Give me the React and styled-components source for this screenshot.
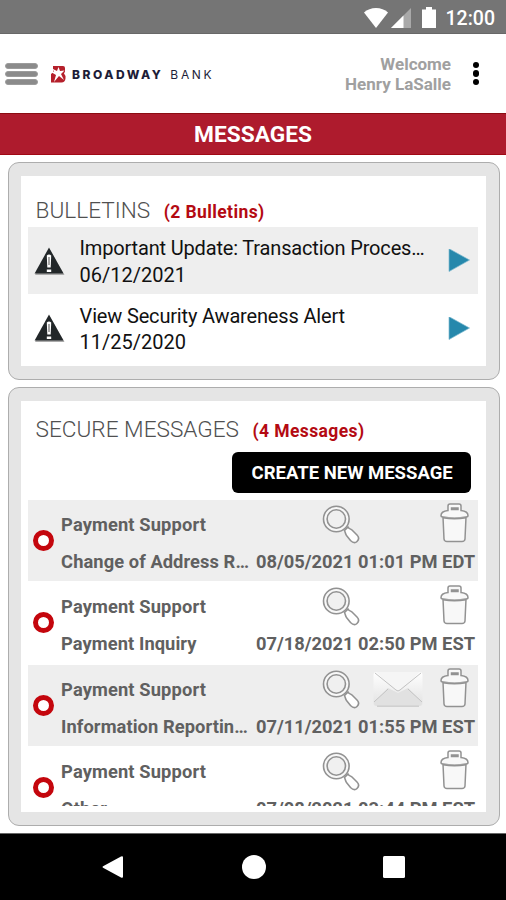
import React from "react";
import styled, { createGlobalStyle } from "styled-components";

const GlobalStyle = createGlobalStyle`
  * { box-sizing: border-box; }
  body { margin: 0; background: #fff; font-family: Roboto, sans-serif; }
`;

const Screen = styled.div`
  width: 506px;
  height: 900px;
  display: flex;
  flex-direction: column;
  overflow: hidden;
  background: #fff;
`;

const StatusBar = styled.div`
  height: 34px;
  flex: none;
  background: #757575;
  border-bottom: 1px solid #686868;
  display: flex;
  align-items: center;
  justify-content: flex-end;
  padding: 2px 11px 0 0;
`;

const Clock = styled.span`
  color: #fff;
  font-size: 19.5px;
  line-height: 22px;
  font-weight: 500;
  margin-left: 8px;
  padding-top: 2px;
`;

const Header = styled.header`
  height: 79px;
  flex: none;
  display: flex;
  align-items: center;
  padding: 0 24px 0 5px;
`;

const MenuButton = styled.div`
  width: 33px;
  height: 22px;
  display: flex;
  flex-direction: column;
  justify-content: space-between;
`;

const MenuLine = styled.span`
  height: 6px;
  border-radius: 3px;
  background: #8b8b8b;
  border: 1px solid #9c9c9c;
`;

const Brand = styled.div`
  display: flex;
  align-items: center;
  margin: 2px 0 0 13px;
`;

const BrandName = styled.span`
  margin-left: 6px;
  font-family: Inter, sans-serif;
  font-size: 12px;
  line-height: 14px;
  font-weight: 800;
  letter-spacing: 2.5px;
  color: #1d1d38;
  white-space: nowrap;
`;

const BrandLight = styled.span`
  font-weight: 400;
  letter-spacing: 2.7px;
  margin-left: 2px;
`;

const Greeting = styled.div`
  margin-left: auto;
  color: #a0a0a0;
  font-size: 17px;
  line-height: 20px;
  font-weight: 700;
  text-align: right;
  margin-top: 1px;
`;

const Overflow = styled.div`
  width: 12px;
  margin-left: 19px;
  height: 24px;
  display: flex;
  flex-direction: column;
  align-items: center;
  justify-content: space-between;
`;

const Dot = styled.span`
  width: 6.4px;
  height: 6.4px;
  border-radius: 50%;
  background: #000;
`;

const TitleBar = styled.h1`
  height: 42px;
  flex: none;
  margin: 0;
  background: #ae1b2d;
  border-top: 1px solid #8b0c12;
  border-bottom: 1px solid #a00814;
  color: #fff;
  text-align: center;
  font-size: 22.7px;
  line-height: 42px;
  font-weight: 700;
`;

const Panel = styled.section`
  margin: ${(p) => p.$gap}px 6.5px 0 7.5px;
  height: ${(p) => p.$height}px;
  flex: none;
  border: 1.5px solid #adadad;
  border-radius: 11px;
  background: #e5e5e5;
  padding: 12.6px;
`;

const PanelBody = styled.div`
  height: 100%;
  background: #fff;
  padding: 0 7.5px 6px 6.5px;
  display: flex;
  flex-direction: column;
`;

const PanelHeading = styled.div`
  height: 51px;
  flex: none;
  padding: ${(p) => p.$top}px 0 0 8px;
  display: flex;
  align-items: baseline;
`;

const PanelTitle = styled.h2`
  margin: 0;
  font-size: 22.6px;
  line-height: 28px;
  font-weight: 300;
  color: #505050;
`;

const Count = styled.span`
  margin-left: 13.5px;
  font-size: 17.5px;
  font-weight: 700;
  color: #b40a12;
  letter-spacing: 0.4px;
`;

const BulletinRow = styled.div`
  height: 67.5px;
  flex: none;
  display: flex;
  align-items: center;
  padding: 2px 8px 0 6px;
  background: ${(p) => (p.$shaded ? "#eee" : "#fff")};
`;

const BulletinText = styled.div`
  flex: 1;
  margin: 1px 0 0 15px;
  font-size: 20px;
  line-height: 26.5px;
  color: #111;
  white-space: nowrap;
`;

const BulletinTitle = styled.div`
  letter-spacing: -0.17px;
`;

const BulletinDate = styled.div`
  letter-spacing: 0;
`;

const Actions = styled.div`
  display: flex;
  justify-content: flex-end;
  height: 48.5px;
  flex: none;
  padding-right: 7px;
`;

const CreateButton = styled.button`
  width: 239.5px;
  height: 41px;
  border: 0;
  padding: 2px 0 0 1px;
  border-radius: 6px;
  background: #000;
  color: #fff;
  font-family: Roboto, sans-serif;
  font-size: 18.5px;
  font-weight: 700;
`;

const MessageList = styled.div`
  flex: 1;
  min-height: 0;
  overflow: hidden;
`;

const MessageRow = styled.div`
  height: 81px;
  margin-bottom: 1.35px;
  display: flex;
  align-items: center;
  background: ${(p) => (p.$shaded ? "#eee" : "#fff")};
  color: #606060;
  font-size: 18.3px;
  font-weight: 700;
  white-space: nowrap;
`;

const UnreadMark = styled.span`
  width: 21px;
  height: 21px;
  flex: none;
  margin: 0 7px 0 5.5px;
  border: 5.5px solid #c4060d;
  border-radius: 50%;
  background: #fff;
`;

const MessageContent = styled.div`
  flex: 1;
  display: flex;
  flex-direction: column;
  height: 100%;
`;

const MessageTop = styled.div`
  height: 49px;
  display: flex;
  padding-top: 3px;
`;

const Sender = styled.span`
  width: 261px;
  line-height: 44px;
  letter-spacing: 0.13px;
`;

const IconSlot = styled.span`
  width: ${(p) => p.$width}px;
  padding-top: ${(p) => p.$top || 0}px;
  height: 46px;
  flex: none;
  display: flex;
`;

const MessageBottom = styled.div`
  display: flex;
  line-height: 26px;
`;

const Subject = styled.span`
  width: 195px;
  letter-spacing: 0.08px;
`;

const Stamp = styled.span``;

const NavBar = styled.nav`
  height: 67px;
  flex: none;
  margin-top: auto;
  background: #000;
  border-top: 1px solid #666;
  display: flex;
  align-items: center;
  justify-content: space-between;
  padding: 0 100px 0 101px;
`;

const StatusIcons = () => (
  <svg width="74" height="24" viewBox="364 5 74 24">
    <path d="M364 11.500C370 5.500 382 5.500 388 11.500L376 27Z" fill="#fff" />
    <path d="M391 27 411 7V27Z" fill="#a9a9a9" />
    <path d="M391 27 403.500 14.500V27Z" fill="#fff" />
    <path d="M422 8.500h4V6h6v2.500h4V27h-14Z" fill="#fff" />
  </svg>
);

const Logo = () => (
  <svg width="15" height="17" viewBox="0 0 15 17">
    <path d="M2 0h10q2 0 2 2v3.500l-1 2q2 2 1.500 5-.5 4-4 4H0V8l2-1.500Z" fill="#b5202b" />
    <path
      d="M1 2.500 6 5 7.500 1 9 5l4.500-.5L10 8l3 6-5-4-5 6 2-7-5-3 3-.5Z"
      fill="#fff"
    />
  </svg>
);

const Warning = () => (
  <svg width="31" height="29" viewBox="0 0 31 29">
    <path d="M15.500 2 30.500 28H1Z" fill="#aaa" />
    <path d="M15 .5 29.500 26.500H.6Z" fill="#222729" />
    <path d="M12.800 8.500q2.200-2 4.400 0L16.700 20.500h-3.400Z" fill="#fff" />
    <path d="M14.500 10h1v8h-1Z" fill="#555" />
    <rect x="12.800" y="22.500" width="4.400" height="2.500" fill="#fff" />
  </svg>
);

const Arrow = () => (
  <svg width="22" height="24" viewBox="0 1 22 24">
    <path d="M1 .7 21.500 12 1 23.500Z" fill="#2688ac" stroke="#7db9ce" strokeWidth=".7" />
  </svg>
);

const Magnifier = () => (
  <svg width="38" height="40" viewBox="0 0 38 40" fill="none" stroke="#929292" strokeWidth="1.600">
    <path d="m22.500 26.500 3.500-3.500c1 2 3 2 4 3l5 5c2 2 2 4.500 0 6.500s-4.500 1-6.500-1l-4-5c-1-1-1-3-2-5Z" fill="#fff" />
    <circle cx="14.300" cy="15" r="12.800" fill="#f8f8f8" />
    <circle cx="14.300" cy="15" r="9.200" fill="#f0f0f0" />
  </svg>
);

const Trash = () => (
  <svg width="29" height="40" viewBox="0 0 29 40" fill="#f8f8f8" stroke="#929292" strokeWidth="1.500">
    <path d="m3 14 1 22q.3 2.500 3 2.500h15q2.700 0 3-2.500l1-22Z" />
    <path d="M1 12.500c0-3 2.500-4.500 7-5V3q0-2 2-2h9q2 0 2 2v4.500c4.500.5 7 2 7 5q0 1.500-2 1.500c-7 1.300-16 1.300-23 0q-2 0-2-1.500Z" />
    <path d="M11.500 5h6.500v1.500h-6.500Z" />
    <path d="M3 14.700q11.500 2 23 0" />
  </svg>
);

const Envelope = () => (
  <svg width="50" height="37" viewBox="0 0 50 37">
    <defs>
      <linearGradient id="paper" x1="0" y1="0" x2="0" y2="1">
        <stop offset="0" stopColor="#fff" />
        <stop offset="1" stopColor="#e2e2e2" />
      </linearGradient>
    </defs>
    <rect x=".5" y="1" width="49" height="34" rx="3" fill="url(#paper)" />
    <path d="M1 32 15 17l10 5 10-5 14 15q-1 3-4 3H5q-3 0-4-3Z" fill="#e1e1e1" />
    <path d="m1 31 14-13M49 31 35 18" stroke="#c2c2c2" strokeWidth="1" />
    <path d="M3 1h44L27 19q-2 2-4 0Z" fill="#f5f5f5" />
    <path d="m2 2 21 17q2 2 4 0L48 2" fill="none" stroke="#c2c2c2" />
    <path d="M4 35.200h42" stroke="#c2c2c2" />
  </svg>
);

const BULLETINS = [
  { title: "Important Update: Transaction Proces…", date: "06/12/2021" },
  { title: "View Security Awareness Alert", date: "11/25/2020" },
];

const MESSAGES = [
  { subject: "Change of Address R…", stamp: "08/05/2021 01:01 PM EDT" },
  { subject: "Payment Inquiry", stamp: "07/18/2021 02:50 PM EST" },
  { subject: "Information Reportin…", stamp: "07/11/2021 01:55 PM EST", mail: true },
  { subject: "Other", stamp: "07/08/2021 03:44 PM EST" },
];

export default function App() {
  return (
    <Screen>
      <GlobalStyle />
      <StatusBar>
        <StatusIcons />
        <Clock>12:00</Clock>
      </StatusBar>
      <Header>
        <MenuButton>
          <MenuLine />
          <MenuLine />
          <MenuLine />
        </MenuButton>
        <Brand>
          <Logo />
          <BrandName>
            BROADWAY <BrandLight>BANK</BrandLight>
          </BrandName>
        </Brand>
        <Greeting>
          Welcome
          <br />
          Henry LaSalle
        </Greeting>
        <Overflow>
          <Dot />
          <Dot />
          <Dot />
        </Overflow>
      </Header>
      <TitleBar>MESSAGES</TitleBar>
      <Panel $gap={7} $height={218}>
        <PanelBody>
          <PanelHeading $top={21}>
            <PanelTitle>BULLETINS</PanelTitle>
            <Count>(2 Bulletins)</Count>
          </PanelHeading>
          {BULLETINS.map((b, i) => (
            <BulletinRow key={b.date} $shaded={i % 2 === 0}>
              <Warning />
              <BulletinText>
                <BulletinTitle>{b.title}</BulletinTitle>
                <BulletinDate>{b.date}</BulletinDate>
              </BulletinText>
              <Arrow />
            </BulletinRow>
          ))}
        </PanelBody>
      </Panel>
      <Panel $gap={7} $height={439}>
        <PanelBody>
          <PanelHeading $top={15}>
            <PanelTitle>SECURE MESSAGES</PanelTitle>
            <Count>(4 Messages)</Count>
          </PanelHeading>
          <Actions>
            <CreateButton>CREATE NEW MESSAGE</CreateButton>
          </Actions>
          <MessageList>
            {MESSAGES.map((m, i) => (
              <MessageRow key={m.stamp} $shaded={i % 2 === 0}>
                <UnreadMark />
                <MessageContent>
                  <MessageTop>
                    <Sender>Payment Support</Sender>
                    <IconSlot $width={51} $top={1}>
                      <Magnifier />
                    </IconSlot>
                    <IconSlot $width={67} $top={3}>
                      {m.mail && <Envelope />}
                    </IconSlot>
                    <IconSlot $width={29}>
                      <Trash />
                    </IconSlot>
                  </MessageTop>
                  <MessageBottom>
                    <Subject>{m.subject}</Subject>
                    <Stamp>{m.stamp}</Stamp>
                  </MessageBottom>
                </MessageContent>
              </MessageRow>
            ))}
          </MessageList>
        </PanelBody>
      </Panel>
      <NavBar>
        <svg width="24" height="26" viewBox="0 0 24 26">
          <path d="M2.500 12 20 2.500q2-1 2 1v19q0 2-2 1L2.500 14q-2-1 0-2Z" fill="#fff" />
        </svg>
        <svg width="24" height="24" viewBox="0 0 24 24">
          <circle cx="12" cy="12" r="12" fill="#fff" />
        </svg>
        <svg width="24" height="24" viewBox="0 0 24 24">
          <rect x="1" y="1" width="22" height="22" rx="1.500" fill="#fff" />
        </svg>
      </NavBar>
    </Screen>
  );
}
